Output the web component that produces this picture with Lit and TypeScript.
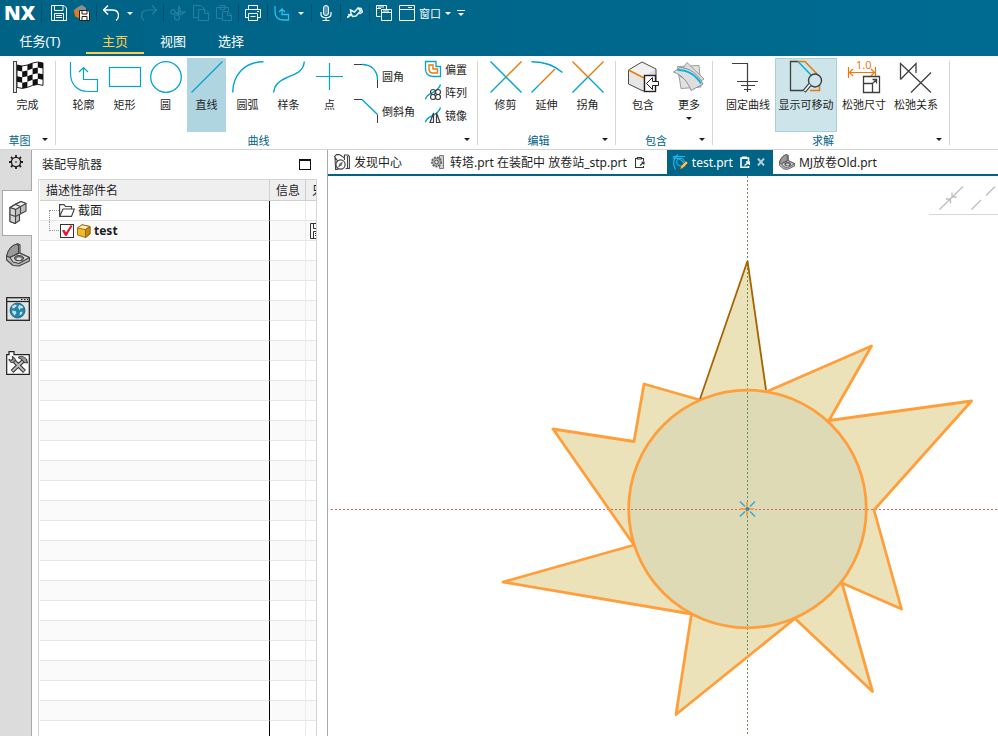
import { LitElement, html, css, svg, nothing, TemplateResult, SVGTemplateResult } from "lit";
import { customElement, property } from "lit/decorators.js";
import { classMap } from "lit/directives/class-map.js";

const pic = (w: number, h: number, body: SVGTemplateResult): TemplateResult =>
  html`<svg width=${w} height=${h} viewBox="0 0 ${w} ${h}" fill="none" aria-hidden="true">${body}</svg>`;

const TEAL = "#00a5d0";
const DARK = "#3f3f3f";
const ORANGE = "#ec7a08";

/* ---------- 32px ribbon icons ---------- */

const flagCells = (() => {
  const wave = [3, 4, 3, 1, 0, 1];
  const cells: string[] = [];
  for (let c = 0; c < 5; c++) {
    for (let r = 0; r < 4; r++) {
      if ((c + r) % 2) continue;
      const x0 = 4 + c * 5.2;
      const x1 = x0 + 5.2;
      const y0 = wave[c] + r * 5.6;
      const y1 = wave[c + 1] + r * 5.6;
      cells.push(`M${x0} ${y0}L${x1} ${y1}V${y1 + 5.6}L${x0} ${y0 + 5.6}Z`);
    }
  }
  return cells.join("");
})();

const big: Record<string, SVGTemplateResult> = {
  finish: svg`<g transform="translate(1 1)"><path d="M4 3L9.200 4L14.400 3L19.600 1L24.800 0L30 1V23.400L24.800 22.400L19.600 23.400L14.400 25.400L9.200 26.400L4 25.400Z" fill="#fff" stroke="#222"/>
    <path d=${flagCells} fill="#111"/><rect x="0.500" y="-0.500" width="3" height="31" fill="#e8e8e8" stroke="#444"/></g>`,
  profile: svg`<path d="M2.500 1V12C2.500 24 10 30.500 20 30.500H29.500V18.500H15.500V7M11 11l4.500-4.500 4.500 4.500" stroke=${TEAL} stroke-width="1.200"/>`,
  rect: svg`<rect x="0.500" y="6.500" width="31" height="19" stroke=${TEAL} stroke-width="1.200"/>`,
  circle: svg`<circle cx="16" cy="16" r="15.300" stroke=${TEAL} stroke-width="1.300"/>`,
  line: svg`<path d="M0.500 31.500L31.500 0.500" stroke=${TEAL} stroke-width="1.300"/>`,
  arc: svg`<path d="M0.700 31.500C1 14 12 1 31.500 0.700" stroke=${TEAL} stroke-width="1.400"/>`,
  spline: svg`<path d="M0.700 31.500C1.500 23 7 19.500 14 16.500C22 13 30.500 11 31.300 0.500" stroke=${TEAL} stroke-width="1.400"/>`,
  point: svg`<path d="M15.500 2V29M2 15.500H29" stroke=${TEAL} stroke-width="1.200"/>`,
  trim: svg`<path d="M0.500 0.500L31.500 31.500M0.500 31.500L16 16" stroke=${TEAL} stroke-width="1.400"/><path d="M16 16L31.500 0.500" stroke=${ORANGE} stroke-width="1.400"/>`,
  extend: svg`<path d="M0.500 0.700C12 0.500 23 4 31.500 11.500M0.500 31.500L8 24" stroke=${TEAL} stroke-width="1.400"/><path d="M8 24L24 8" stroke=${ORANGE} stroke-width="1.400"/>`,
  corner: svg`<path d="M0.500 31.500L16 16L31.500 31.500" stroke=${TEAL} stroke-width="1.400"/><path d="M0.500 0.500L16 16L31.500 0.500" stroke=${ORANGE} stroke-width="1.400"/>`,
  include: svg`<path d="M1.500 9L15 1L29 8V23L16 30L1.500 23Z" fill="#dcdcdc"/><path d="M1.500 9L15 1L29 8L16 16.500Z" fill="#f1f1f1"/><path d="M16 16.500L1.500 9V23L16 30Z" fill="#e6e6e6"/>
    <path d="M1.500 9L15 1L29 8V23L16 30L1.500 23Z" stroke="#4a4a4a"/>
    <path d="M1.500 9L17 17" stroke=${ORANGE} stroke-width="1.600"/>
    <rect x="17.500" y="14.500" width="11" height="16" fill="#fff" stroke="#222" stroke-width="1.400"/>
    <path d="M19.500 22.500L25.500 16.500V20.500H31.500V24.500H25.500V28.500Z" fill="#fff" stroke="#222"/>`,
  more: svg`<path d="M4.500 5.500L26 4.500L28 26L8 27.500Z" fill="#e2e2e2" stroke="#9c9c9c"/><path d="M14 1.500L31 18L22 24L5 14Z" fill="#dcdcdc" stroke="#9c9c9c"/>
    <path d="M0.500 11L7 6.500C17 7 25 13 30 23L18 29.500C15 21 9 14 0.500 11Z" fill="#dedede" stroke="#8f8f8f"/>
    <path d="M4.500 9C15 9 22 13 28 22.500" stroke="#0ab4e0" stroke-width="1.800"/>`,
  fix: svg`<path d="M0 2.500H15.500V31M5 20.500H26M9 24.500H23M12 28.500H19" stroke=${DARK} stroke-width="1.200"/>`,
  movable: svg`<path d="M8 0.500H0.500V29.500H13" stroke=${DARK} stroke-width="1.300"/><path d="M8 0.500L21 14" stroke="#00b4dc" stroke-width="1.600"/>
    <path d="M8 0.500H15L27 13M29.500 24V29.500H20" stroke=${ORANGE} stroke-width="1.600"/>
    <circle cx="25" cy="19.500" r="6.500" fill="#cfe6ec" stroke=${DARK} stroke-width="1.400"/><path d="M20 23.500L14 30.500" stroke=${DARK} stroke-width="4"/><path d="M20 23.500L14.500 30" stroke="#fff" stroke-width="1.500"/>`,
  dimension: svg`<text x="8" y="8" class="dim" fill=${ORANGE}>1.0</text><path d="M0.500 6V17M27.500 6V15M1 11.500H27M5 8L1.500 11.500L5 15M23 8L26.500 11.500L23 15" stroke=${ORANGE} stroke-width="1.200"/>
    <path d="M15.500 15.500H31.500V31.500H15.500ZM15.500 22.500H24.500V31.500M24 23L28.500 18.500M24.500 18.500H28.500V22.500" stroke=${DARK} stroke-width="1.300"/>`,
  relation: svg`<path d="M0.500 18.500V2.500L31 31.500M0.500 18.500L16 2.500V12M31 11.500L11 31.500" stroke=${DARK} stroke-width="1.300"/>`,
};

/* ---------- smaller ribbon icons ---------- */

const small: Record<string, TemplateResult> = {
  fillet: pic(26, 26, svg`<path d="M1 1.500H9M24.500 17V25" stroke=${DARK}/><path d="M9 1.500C19 1.500 24.500 8 24.500 17" stroke=${TEAL} stroke-width="1.400"/>`),
  chamfer: pic(26, 26, svg`<path d="M1 1.500H9M24.500 16.500V25" stroke=${DARK}/><path d="M9 1.500L24.500 16.500" stroke=${TEAL} stroke-width="1.400"/>`),
  offset: pic(16, 16, svg`<path d="M0.500 0.500H11V5.500H15.500V15.500H8C3 15.500 0.500 12 0.500 8Z" stroke=${TEAL} stroke-width="1.300"/><path d="M4 4H8V8H12.500V12H8C5 12 4 10 4 8Z" stroke=${ORANGE} stroke-width="1.400"/>`),
  pattern: pic(16, 16, svg`<path d="M0.500 15.500C1 8 13 10 15.500 0.500" stroke=${TEAL} stroke-width="1.300"/><g stroke=${DARK} stroke-width="1.200"><circle cx="8" cy="8" r="2.500"/><circle cx="13" cy="8" r="2.500"/><circle cx="8" cy="13" r="2.500"/><circle cx="13" cy="13" r="2.500"/></g>`),
  mirror: pic(16, 16, svg`<path d="M0.500 15.500C1 8 13 10 15.500 0.500" stroke=${TEAL} stroke-width="1.300"/><path d="M8.500 6V15.500H5ZM11.500 6V15.500H15Z" fill="#fff" stroke=${DARK} stroke-width="1.200"/>`),
};

/* ---------- quick access icons ---------- */

const W = "#fff";
const quick: Record<string, TemplateResult> = {
  save: pic(16, 16, svg`<path d="M0.500 0.500H13L15.500 3V15.500H0.500ZM3.500 0.500V5.500H12V0.500M3.500 15.500V8.500H12.500V15.500M5 10.500H11M5 12.500H11" stroke=${W}/>`),
  saveAll: pic(16, 16, svg`<path d="M4 2L8 0L12 3V12L2 12L0 5Z" fill="#8e8e8e"/><path d="M0 5L6 6L6 14L1 11Z" fill=${ORANGE}/><path d="M5.500 5.500H14L15.500 7V15.500H5.500Z" fill="#fff" stroke="#222"/><path d="M8 6V9H13V6M8 15V11.500H13V15" stroke="#222"/>`),
  undo: pic(16, 16, svg`<path d="M5 0.500L0.500 5L5 9.500M0.500 5H9C13 5 15.500 7 15.500 10.500C15.500 13 14.500 14.500 13 15.500" stroke=${W} stroke-width="1.300"/>`),
  redo: pic(16, 16, svg`<path d="M11 0.500L15.500 5L11 9.500M15.500 5H7C3 5 0.500 7 0.500 10.500C0.500 13 1.500 14.500 3 15.500" stroke="#2580a2" stroke-width="1.200"/>`),
  cut: pic(16, 16, svg`<g stroke="#2580a2" stroke-width="1.200"><circle cx="3" cy="7" r="2.300"/><circle cx="7" cy="12.500" r="2.500"/><path d="M5 8L15.500 6.500L11 9.500L5 8M7.500 10L9 1L10.500 6L8 10"/></g>`),
  copy: pic(16, 16, svg`<path d="M5.500 12.500H0.500V0.500H8L10.500 3V4M5.500 4.500H12L15.500 8V15.500H5.500ZM11.500 4.500V8.500H15.500" stroke="#2580a2"/>`),
  paste: pic(16, 16, svg`<path d="M6 13.500H0.500V2.500H12.500V6M4 2.500V0.500H9V4.500H4ZM6.500 6.500H12L15.500 10V15.500H6.500ZM11.500 6.500V10.500H15.500" stroke="#2580a2"/>`),
  print: pic(16, 16, svg`<path d="M3.500 4.500V0.500H12.500V4.500M3.500 12.500H0.500V4.500H15.500V12.500H12.500M3.500 8.500H12.500V15.500H3.500ZM5.500 11.500H10.500M12 6.500H14" stroke=${W}/>`),
  sketch: pic(16, 16, svg`<path d="M1 1V6C1 12 4 15 9 15H14.500V9.500H8V4M5 7L8 4L11 7" stroke="#21c3f3" stroke-width="1.300"/>`),
  mic: pic(16, 16, svg`<rect x="5.500" y="0.500" width="5" height="10" rx="2.500" fill="#fff" fill-opacity=".35" stroke=${W}/><path d="M3 7V9C3 14 13 14 13 9V7M8 12.500V15.500M4.500 15.500H11.500" stroke=${W} stroke-width="1.200"/>`),
  touch: pic(16, 16, svg`<path d="M3.500 5L7.500 7L11 3L13.500 6L9 11L5.500 11.500L4 8.500ZM11 3L14 3.500L15.500 7L12.500 9M0 12.500L4 10L1 9.500" stroke="#e6f2f6" stroke-width="1.500"/>`),
  cascade: pic(16, 16, svg`<path d="M4.500 11.500H0.500V0.500H10.500V4M0.500 3.500H5M5.500 4.500H15.500V15.500H5.500ZM5.500 7.500H15.500M7 6H13M2 2H8" stroke=${W}/>`),
  window: pic(16, 16, svg`<path d="M0.500 0.500H15.500V15.500H0.500ZM0.500 4.500H15.500M9 2.500H13" stroke=${W}/>`),
};

/* ---------- file tab and resource bar icons ---------- */

const misc = {
  discover: pic(16, 16, svg`<path d="M3.500 7L0.600 2.500L2.500 0.600H5.500L10.500 4V6M1 3.500L1.600 15.400H4M10.500 4V1H14L15.400 2.500V14.500H11.500M13.500 2V14" stroke="#444" stroke-width="1.100"/><circle cx="6.500" cy="10.500" r="4.600" fill="#fff" stroke="#444" stroke-width="1.200"/><path d="M9 7.500L7.500 11.500L4 13.500L5.500 9.500Z" fill="#666"/>`),
  assembly: pic(16, 16, svg`<path d="M9.500 1.500H13.500V14.500H9.500Z" fill="#d0d0d0" stroke="#777"/><circle cx="6.500" cy="8" r="4.500" fill="#b5b5b5" stroke="#666" stroke-width="2" stroke-dasharray="2 1"/><circle cx="6.500" cy="8" r="1.800" fill="#eee" stroke="#555"/>`),
  sketchPart: pic(16, 16, svg`<path d="M0.500 4C7 3 12 7 13 13M3.500 15.500C0 9 2 3 6 0.500M1 2.500H13" stroke="#22b6ea" stroke-width="1.200"/><circle cx="8.500" cy="8" r="3.800" stroke="#22b6ea" stroke-width="1.200"/><path d="M8 15.500L9 12L14 7L16 9L11 14Z" fill="#f6c667" stroke="#7a3f10" stroke-width=".6"/>`),
  sheetDark: pic(10, 12, svg`<path d="M7 2.500H8.500V5M8.500 10V11.500H0.500V2.500H2M2.500 1.500H6.500V3H2.500ZM5 9.500L9 6M6.500 6H9V8.500" stroke="#333" stroke-width="1.100"/>`),
  sheetLight: pic(10, 12, svg`<path d="M7 2H8.500V5M8.500 10V11.300H1V2H2" stroke="#fff" stroke-width="1.600"/><path d="M2 0.500H7V3H2Z" fill="#fff"/><path d="M4.500 9.500L9 6M6 6H9.300V9" stroke="#fff" stroke-width="1.300"/>`),
  close: pic(8, 8, svg`<path d="M1 0.500L7 7.500M7 0.500L1 7.500" stroke="#b5ccd6" stroke-width="2"/>`),
  gear: pic(14, 14, svg`<circle cx="7" cy="7" r="4.600" stroke="#222" stroke-width="1.400"/><path d="M7 0V2.500M7 11.500V14M0 7H2.500M11.500 7H14M2 2L3.800 3.800M10.200 10.200L12 12M12 2L10.200 3.800M3.800 10.200L2 12" stroke="#222" stroke-width="1.800"/><path d="M6 7H8" stroke="#222"/>`),
  blocks: pic(18, 24, svg`<g stroke="#444" stroke-width="1.100" stroke-linejoin="round"><path d="M1 6.500L6.500 3L12 0.500L17 2.500V10L10.500 13.500V19.500L6 22.500L1 20.500Z" fill="#bdbdbd"/><path d="M1 6.500L12 0.500L17 2.500L6.500 8.500Z" fill="#efefef"/><path d="M1 6.500L6.500 8.500V22.500L1 20.500Z" fill="#d6d6d6"/><path d="M1 13.500L6.500 15.500L10.500 13.500M6.500 3.500L11.500 5.500V12.500"/></g>`),
  globe: pic(24, 24, svg`<rect x="0.700" y="0.700" width="22.600" height="22.600" fill="#e3e3e3" stroke="#222" stroke-width="1.300"/><path d="M1 4.500H23" stroke="#222" stroke-width="1.300"/><path d="M15 2.500H22" stroke="#222" stroke-dasharray="1.500 1.500"/><circle cx="11.500" cy="13.500" r="7.500" fill="#2384a8" stroke="#17607c" stroke-width=".8"/><path d="M6 9L9 7.500L11 8.500L8.500 11L6.500 11.500ZM13 8L16.500 9L17 11L14.500 11.500L13.500 13L12 10.500ZM6 13.500L9.500 14L10.500 16L8.500 18.500L6.500 16ZM14 15L16.500 14.500L16 17L13.500 18.500Z" fill="#c4e2ec"/>`),
  tools: pic(24, 24, svg`<path d="M0.700 3.700H3V0.700H8V3.700H23.300V23.300H0.700Z" fill="#fff" stroke="#222" stroke-width="1.200"/><path d="M6 8L18.500 20.500M17 10L6 20.500" stroke="#333" stroke-width="4"/><path d="M6 8L18 20M17 10L6.500 20" stroke="#bbb" stroke-width="1.800"/><path d="M3 8C3 12 7 12 9 10.500C9.500 8 8.500 6 6 5.500L7 8L5 9.500ZM12 6.500C15 4.500 18 5.500 20.500 8L21.500 12L18 11.500L16 8.500Z" fill="#999" stroke="#333"/>`),
  folder: pic(16, 13, svg`<path d="M0.600 12.400V0.600H5L6.500 2.500H12.500V5M0.600 12.400L4 5H15.400L12.500 12.400Z" fill="#fff" stroke="#444" stroke-width="1.200"/>`),
  part: pic(14, 14, svg`<g stroke="#8a5a00" stroke-width=".8" stroke-linejoin="round"><path d="M0.500 4L5 0.800L13 2.500V10L8.500 13.500L0.500 11Z" fill="#f2bb2a"/><path d="M0.500 4L5 0.800L13 2.500L8.500 5.500Z" fill="#fdf0bd"/><path d="M8.500 5.500L13 2.500V10L8.500 13.500Z" fill="#c98a10"/></g>`),
  disk: pic(16, 16, svg`<path d="M0.500 0.500H15.500V15.500H0.500ZM3.500 0.500V5.500H12V0.500M3.500 15.500V8.500H12.500V15.500M5 10.500H11M5 12.500H11" stroke="#333"/>`),
};

const bracket = (w: number, h: number) => html`<svg width=${w} height=${h} viewBox="0 0 24 24" fill="none" aria-hidden="true">
  <g stroke="#444" stroke-width="1.100" stroke-linejoin="round"><path d="M0.600 13C2 7 6 2 12 0.800L14 2V10L23.400 14.500V18L13 23L7 22.500L0.600 17Z" fill="#b9b9b9"/>
  <path d="M0.600 13C2 7 6 2 11 1L12.500 2.500V10L4 14.500Z" fill="#9a9a9a"/><path d="M4 14.500L13.500 10L23.400 14.500L13 20.500L7 19Z" fill="#d5d5d5"/></g>
  <ellipse cx="13" cy="15.200" rx="4.500" ry="2.500" fill="#777" stroke="#333"/><ellipse cx="13" cy="15.900" rx="2.500" ry="1.300" fill="#ddd"/></svg>`;

interface Tool { icon: string; label: string; active?: boolean; menu?: boolean; }

@customElement("nx-titlebar")
class NxTitlebar extends LitElement {
  static styles = css`
    :host { display: block; background: linear-gradient(90deg, #006386, #006b91); color: #fff; }
    button { border: 0; padding: 0; background: none; color: inherit; font: inherit; display: flex; align-items: center; justify-content: center; flex: none; }
    svg { display: block; }
    .quick { display: flex; align-items: center; gap: 7px; height: 26px; padding-left: 4px; }
    .logo { font: 800 20px/26px "Open Sans", "Noto Sans", sans-serif; width: 31px; white-space: nowrap; }
    .sep { width: 1px; height: 18px; margin: 0 -1px; background: #00506d; flex: none; }
    .logo + .sep { margin-right: 2px; }
    .caret { width: 8px; height: 16px; }
    .window { gap: 4px; font-size: 11px; margin-right: -4px; }
    .custom { margin-left: -2px; }
    nav { display: flex; height: 30px; align-items: flex-start; }
    nav a { width: 58px; height: 26px; font-size: 13px; line-height: 30px; text-align: center; color: #fff; text-decoration: none; border-bottom: 2px solid transparent; }
    nav a:first-child { width: 80px; margin-right: 6px; }
    nav a.on { color: #ffcf4b; border-color: #ffcf4b; }
  `;
  private tool(name: string, title: string) {
    return html`<button title=${title} aria-label=${title}>${quick[name]}</button>`;
  }
  private caret(title: string) {
    return html`<button class="caret" aria-label=${title}>${pic(6, 3, svg`<path d="M0 0H6L3 3Z" fill="#fff"/>`)}</button>`;
  }
  render() {
    const sep = html`<span class="sep"></span>`;
    return html`
      <div class="quick">
        <span class="logo">NX</span>${sep}
        ${this.tool("save", "保存")}${this.tool("saveAll", "全部保存")}${sep}
        ${this.tool("undo", "撤销")}${this.caret("撤销列表")}${this.tool("redo", "重做")}${sep}
        ${this.tool("cut", "剪切")}${this.tool("copy", "复制")}${this.tool("paste", "粘贴")}${sep}
        ${this.tool("print", "打印")}${sep}
        ${this.tool("sketch", "轮廓")}${this.caret("更多曲线")}${sep}
        ${this.tool("mic", "语音")}${sep}${this.tool("touch", "触控")}${sep}
        ${this.tool("cascade", "切换窗口")}
        <button class="window">${quick.window}<span>窗口</span></button>
        ${this.caret("窗口列表")}
        <button class="caret custom" aria-label="自定义">${pic(8, 6, svg`<path d="M0 .5H8" stroke="#fff"/><path d="M1 3H7L4 6Z" fill="#fff"/>`)}</button>
      </div>
      <nav>
        ${["任务(T)", "主页", "视图", "选择"].map((t, i) => html`<a href="#" class=${i === 1 ? "on" : ""}>${t}</a>`)}
      </nav>`;
  }
}

@customElement("nx-group")
class NxGroup extends LitElement {
  @property() label = "";
  @property({ attribute: false }) tools: Tool[] = [];
  @property({ attribute: false }) corners: Tool[] = [];
  @property({ attribute: false }) minis: Tool[] = [];
  @property({ reflect: true }) size = "narrow";
  static styles = css`
    :host { display: flex; flex-direction: column; flex: none; height: 91px; padding-top: 2px;
      background: linear-gradient(#d6d6d6, #d6d6d6) right 5px / 1px 84px no-repeat; }
    button { border: 0; padding: 0; background: none; color: #1e1e1e; font: inherit; flex: none; }
    svg { display: block; overflow: visible; flex: none; }
    .dim { font: 11px "Noto Sans", sans-serif; }
    .row { display: flex; height: 74px; gap: 2px; padding: 0 9px 0 8px; }
    .tool { width: 39px; padding-top: 3px; display: flex; flex-direction: column; align-items: center; gap: 5px; line-height: 14px; white-space: nowrap; box-sizing: border-box; }
    :host([size="medium"]) .tool { width: 44px; }
    :host([size="medium"]) .row { padding: 0 2px 0 5px; }
    :host([size="wide"]) .tool { width: 50px; }
    :host([size="wide"]) .row { padding: 0 9px 0 10px; }
    .tool.active { background: #aed5e0; }
    :host([size="wide"]) .tool.active { width: 62px; background: #cde5ea; border: 1px solid #a6d0da; padding-top: 2px; }
    .corners, .minis { display: flex; flex-direction: column; }
    .corners { margin-left: 2px; width: 62px; }
    .minis { margin: -1px 0 0 8px; width: 44px; }
    .corners button, .minis button { display: flex; align-items: center; gap: 3px; white-space: nowrap; }
    .corners button { height: 35px; }
    .minis button { height: 23px; gap: 4px; }
    .foot { display: flex; align-items: center; height: 15px; color: #00618a; padding-right: 1px; }
    .foot span { flex: 1; text-align: center; }
    .foot button { width: 16px; padding-left: 3px; height: 15px; }
  `;
  render() {
    const caret = pic(6, 3, svg`<path d="M0 0H6L3 3Z" fill="#1e1e1e"/>`);
    const item = (t: Tool) => html`<button>${small[t.icon]}<span>${t.label}</span></button>`;
    return html`
      <div class="row">
        ${this.tools.map((t) => html`
          <button class=${classMap({ tool: true, active: !!t.active })}>
            ${pic(32, 32, big[t.icon])}<span>${t.label}</span>${t.menu ? caret : nothing}
          </button>`)}
        ${this.corners.length ? html`<div class="corners">${this.corners.map(item)}</div>` : nothing}
        ${this.minis.length ? html`<div class="minis">${this.minis.map(item)}</div>` : nothing}
      </div>
      <div class="foot"><span>${this.label}</span><button aria-label="${this.label}选项">${caret}</button></div>`;
  }
}

@customElement("nx-navigator")
class NxNavigator extends LitElement {
  static styles = css`
    :host { display: flex; flex-direction: column; width: 295px; flex: none; border-right: 1px solid #a9a9a9; background: #fff; overflow: hidden; }
    svg { display: block; flex: none; }
    header { display: flex; align-items: center; justify-content: space-between; height: 29px; padding: 0 16px 0 10px; flex: none; }
    h2 { margin: 0; font-size: 12px; line-height: 16px; font-weight: 400; }
    header button { width: 12px; height: 11px; padding: 0; border: 1px solid #111; border-top-width: 2px; background: none; }
    .frame { flex: 1; min-height: 0; margin: 0 10px 0 6px; border: 1px solid #d4d4d4; border-bottom: 0; padding-left: 1px; overflow: hidden; }
    table { width: 100%; table-layout: fixed; border-collapse: separate; border-spacing: 0; font-size: 12px; }
    th, td { padding: 0; height: 19px; overflow: hidden; white-space: nowrap; text-align: left; font-weight: 400; border-bottom: 1px solid #e6e6e6; }
    th { background: #efefef; height: 20px; border-bottom-color: #cfcfcf; padding-left: 6px; border-right: 1px solid #cfcfcf; }
    th:last-child { border-right: 0; }
    td:first-child { border-right: 1px solid #000; }
    td:nth-child(2) { border-right: 1px solid #ececec; }
    tbody tr:nth-child(even) { background: #fafafa; }
    .info { width: 29px; }
    .name { width: 223px; }
    .cell { display: flex; align-items: center; height: 19px; line-height: 18px; padding-left: 9px; }
    .cell .twig { width: 10px; flex: none; height: 10px; align-self: flex-end; border-left: 1px dotted #999; border-top: 1px dotted #999; box-sizing: border-box; }
    .cell .twig.last { align-self: flex-start; border-top: 0; border-bottom: 1px dotted #999; }
    .cell svg { margin-right: 3px; }
    .cell input { appearance: none; width: 14px; height: 14px; margin: 0 3px 0 1px; border: 1px solid #333; background: #fff; flex: none; }
    .cell input:checked::before { content: ""; display: block; width: 12px; height: 12px; background: #e8112d; clip-path: polygon(8% 50%, 28% 44%, 42% 66%, 80% 6%, 96% 10%, 46% 96%, 34% 94%); }
    label { display: flex; align-items: center; font-weight: 700; }
    .disk svg { margin-left: 4px; }
  `;
  render() {
    const blank = Array.from({ length: 26 });
    return html`
      <header><h2>装配导航器</h2><button aria-label="最大化"></button></header>
      <div class="frame"><table>
        <thead><tr><th class="name">描述性部件名</th><th class="info">信息</th><th>只</th></tr></thead>
        <tbody>
          <tr><td><div class="cell"><span class="twig"></span>${misc.folder}截面</div></td><td></td><td></td></tr>
          <tr><td><div class="cell"><span class="twig last"></span><input type="checkbox" id="part" checked /><label for="part">${misc.part}test</label></div></td><td></td><td class="disk">${misc.disk}</td></tr>
          ${blank.map(() => html`<tr><td></td><td></td><td></td></tr>`)}
        </tbody>
      </table></div>`;
  }
}

@customElement("nx-viewport")
class NxViewport extends LitElement {
  static styles = css`
    :host { display: flex; flex-direction: column; flex: 1; min-width: 0; overflow: hidden; }
    button { border: 0; padding: 0; background: none; color: inherit; font: inherit; display: flex; align-items: center; }
    .files { display: flex; height: 24px; flex: none; font-size: 12px; border-bottom: 2px solid #006487; }
    .file { display: flex; align-items: center; padding: 0 22px 0 6px; white-space: nowrap; }
    .file button { gap: 4px; }
    .file .end { margin-left: 7px; }
    .file button .end { margin-left: 4px; }
    .file.on { background: #006487; color: #fff; padding: 0 8px 0 5px; }
    .file svg { display: block; flex: none; }
    .canvas { flex: 1; min-height: 0; position: relative; background: #fff; }
    .drawing { display: block; width: 100%; height: 100%; }
    .hints { position: absolute; top: 10px; right: 0; width: 69px; height: 29px; border-bottom: 1px solid #d8d8d8; display: flex; gap: 7px; padding-left: 10px; box-sizing: border-box; overflow: hidden; }
    .hints button { align-items: flex-start; flex: none; }
  `;
  private file(icon: TemplateResult, name: string, sheet = false) {
    return html`<div class="file"><button>${icon}<span>${name}</span>${sheet ? html`<span class="end">${misc.sheetDark}</span>` : nothing}</button></div>`;
  }
  render() {
    const orange = "#ff9f3c";
    return html`
      <div class="files">
        ${this.file(misc.discover, "发现中心")}
        ${this.file(misc.assembly, "转塔.prt 在装配中 放卷站_stp.prt", true)}
        <div class="file on"><button>${misc.sketchPart}<span>test.prt</span></button>
          <span class="end">${misc.sheetLight}</span><button class="end" aria-label="关闭">${misc.close}</button></div>
        ${this.file(bracket(16, 16), "MJ放卷Old.prt")}
      </div>
      <div class="canvas">
        <svg class="drawing" viewBox="328 176 670 560" preserveAspectRatio="xMinYMin slice" role="img" aria-label="草图">
          <path d="M747.500 261L767 391.500L871.500 346L829 420.500L971.500 401L874 510L901.500 609L842 583L872.500 691.500L795 618.500L676 714.500L691.500 614L503 582L634 545L553 429L634 441.500L644 384L700 400Z" fill="#ebe2ba"/>
          <circle cx="747.500" cy="509" r="118.800" fill="#dddab5"/>
          <path d="M747.500 176V736" stroke="#5f9358" stroke-dasharray="2 2"/>
          <path d="M331 509.500H998" stroke="#c96a6a" stroke-dasharray="2 2"/>
          <g fill="none" stroke=${orange} stroke-width="2.800" stroke-linejoin="round">
            <circle cx="747.500" cy="509" r="118.800"/>
            <path d="M767 391.500L871.500 346L829 420.500L971.500 401L874 510L901.500 609L842 583L872.500 691.500L795 618.500L676 714.500L691.500 614L503 582L634 545L553 429L634 441.500L644 384L700 400"/>
          </g>
          <path d="M700 399L747.500 261L766 390" fill="none" stroke="#a56500" stroke-width="1.800"/>
          <path d="M747 502V516M740 509H754" stroke=${orange} stroke-width="1.800"/>
          <path d="M740 501.500L745 506.500M755 501.500L750 506.500M740 516.500L745 511.500M755 516.500L750 511.500" stroke="#3fa7e0" stroke-width="1.600"/>
          <circle cx="747.500" cy="509" r="2" fill="#2b8fc8"/>
        </svg>
        <div class="hints">
          <button aria-label="相接">${pic(25, 24, svg`<path d="M0.500 23.500L24 0.500M7 13H11.500V17.500M17.500 11H13V6.500" stroke="#bdbdbd" stroke-width="1.300"/>`)}</button>
          <button aria-label="对齐">${pic(25, 24, svg`<path d="M0.500 23.500L10 14M15 9.500L24 0.500" stroke="#bdbdbd" stroke-width="1.300"/>`)}</button>
        </div>
      </div>`;
  }
}

@customElement("app-root")
class AppRoot extends LitElement {
  static styles = css`
    :host { display: flex; flex-direction: column; height: 100vh; overflow: hidden; background: #fff; color: #1e1e1e;
      font: 11px "Noto Sans", "Noto Sans CJK SC", sans-serif; }
    .ribbon { display: flex; height: 93px; border-bottom: 1px solid #d4d4d4; flex: none; }
    main { display: flex; flex: 1; min-height: 0; }
    .rail { display: flex; flex-direction: column; gap: 16px; width: 32px; flex: none; background: #dcdcdc; border-right: 1px solid #a9a9a9; box-sizing: border-box; }
    .rail button { border: 0; padding: 0 0 0 5px; height: 38px; background: none; display: flex; align-items: center; justify-content: center; }
    .rail .gear { height: 24px; padding: 0; }
    .rail .on { height: 46px; margin: 0 -1px -16px 2px; padding: 0; background: #fff; border: 1px solid #a9a9a9; border-right: 0; box-sizing: border-box; }
  `;
  render() {
    return html`
      <nx-titlebar></nx-titlebar>
      <div class="ribbon">
        <nx-group label="草图" .tools=${[{ icon: "finish", label: "完成" }]}></nx-group>
        <nx-group label="曲线"
          .tools=${[
            { icon: "profile", label: "轮廓" }, { icon: "rect", label: "矩形" }, { icon: "circle", label: "圆" },
            { icon: "line", label: "直线", active: true }, { icon: "arc", label: "圆弧" },
            { icon: "spline", label: "样条" }, { icon: "point", label: "点" },
          ]}
          .corners=${[{ icon: "fillet", label: "圆角" }, { icon: "chamfer", label: "倒斜角" }]}
          .minis=${[{ icon: "offset", label: "偏置" }, { icon: "pattern", label: "阵列" }, { icon: "mirror", label: "镜像" }]}></nx-group>
        <nx-group label="编辑" .tools=${[{ icon: "trim", label: "修剪" }, { icon: "extend", label: "延伸" }, { icon: "corner", label: "拐角" }]}></nx-group>
        <nx-group label="包含" size="medium" .tools=${[{ icon: "include", label: "包含" }, { icon: "more", label: "更多", menu: true }]}></nx-group>
        <nx-group label="求解" size="wide" .tools=${[
          { icon: "fix", label: "固定曲线" }, { icon: "movable", label: "显示可移动", active: true },
          { icon: "dimension", label: "松弛尺寸" }, { icon: "relation", label: "松弛关系" },
        ]}></nx-group>
      </div>
      <main>
        <div class="rail">
          <button class="gear" aria-label="设置">${misc.gear}</button>
          <button class="on" aria-label="装配导航器">${misc.blocks}</button>
          <button aria-label="部件">${bracket(24, 24)}</button>
          <button aria-label="浏览器">${misc.globe}</button>
          <button aria-label="工具">${misc.tools}</button>
        </div>
        <nx-navigator></nx-navigator>
        <nx-viewport></nx-viewport>
      </main>`;
  }
}
